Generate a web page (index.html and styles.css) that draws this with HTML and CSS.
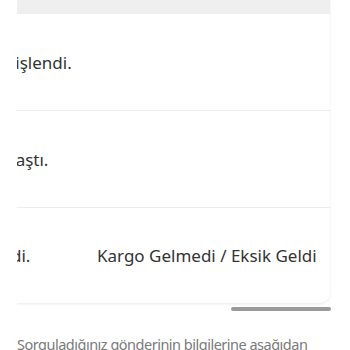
FILE: index.html
```html
<!DOCTYPE html>
<html lang="tr">
<head>
<meta charset="utf-8">
<title>Kargo</title>
<link rel="stylesheet" href="styles.css">
</head>
<body>
<div class="scroller">
  <div class="card">
    <div class="head"></div>
    <div class="row">
      <div class="cell date">12.03.2024 14:32</div>
      <div class="cell desc">Gönderi teslim edilmedi, iade talebiniz işlendi.</div>
      <div class="cell type"></div>
    </div>
    <div class="row">
      <div class="cell date">11.03.2024 09:15</div>
      <div class="cell desc">Gönderi hasarlı ve geç şekilde alıcıya ulaştı.</div>
      <div class="cell type"></div>
    </div>
    <div class="row">
      <div class="cell date">10.03.2024 17:48</div>
      <div class="cell desc">Gönderi alıcıya eksik mal ile teslim edildi.</div>
      <div class="cell type">Kargo Gelmedi / Eksik Geldi</div>
    </div>
  </div>
</div>
<div class="scrollbar"><div class="thumb"></div></div>
<p class="note">Sorguladığınız gönderinin bilgilerine aşağıdan ulaşabilirsiniz.</p>
</body>
</html>
```
FILE: styles.css
```css
html, body {
  margin: 0;
  padding: 0;
  background: #ffffff;
}
body {
  font-family: "Noto Sans", "Open Sans", sans-serif;
  color: #333333;
}
.scroller {
  margin: 0 19px 0 17px;
  overflow: hidden;
  direction: rtl;
  padding-bottom: 4px;
}
.card {
  direction: ltr;
  width: 985px;
  margin: 0 1px 0 0;
  background: #ffffff;
  border-radius: 0 0 10px 10px;
  box-shadow: 0 1px 3px rgba(0, 0, 0, 0.09);
}
.head {
  height: 14px;
  background: #efefef;
}
.row {
  display: grid;
  grid-template-columns: 344px 392px 1fr;
  align-items: center;
  height: 96px;
  border-bottom: 1px solid #ececec;
}
.row:last-child {
  border-bottom: none;
  height: 95px;
}
.cell {
  padding: 0 16px;
  font-size: 17px;
  white-space: nowrap;
  overflow: hidden;
}
.scrollbar {
  margin: 0 19px 0 17px;
  height: 4px;
  display: flex;
  justify-content: flex-end;
}
.thumb {
  width: 100px;
  height: 4px;
  border-radius: 2px;
  background: #9a9a9a;
}
.note {
  width: 314px;
  margin: 23px 0 0 17px;
  font-size: 14.5px;
  line-height: 20px;
  letter-spacing: -0.5px;
  color: #7a7a7a;
}
```
